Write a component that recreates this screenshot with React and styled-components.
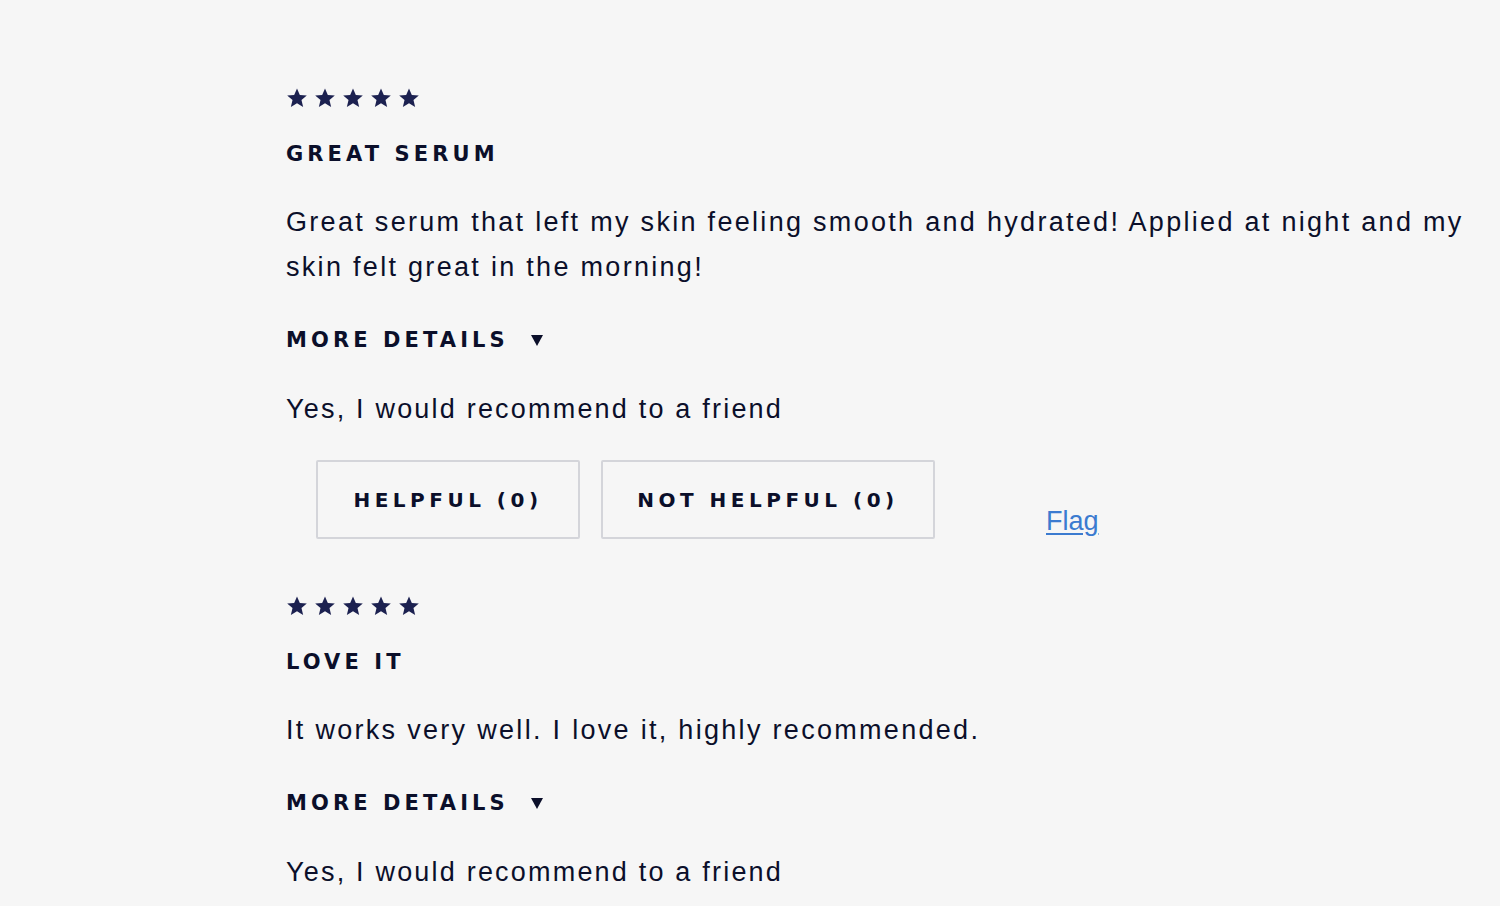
import React from 'react';
import styled, {createGlobalStyle} from 'styled-components';

const GlobalStyle = createGlobalStyle`
    html, body {
        margin: 0;
        padding: 0;
        background: #f6f6f6;
    }
    body {
        font-family: "Liberation Sans", Arial, sans-serif;
        color: #0b0f2a;
    }
`;

const heading = `
    font-family: "DejaVu Sans", "Liberation Sans", sans-serif;
    font-weight: 700;
    font-size: 21px;
    letter-spacing: 4.1px;
    line-height: 24px;
`;

const Page = styled.div`
    width: 1500px;
    height: 906px;
    overflow: hidden;
    padding: 87px 0 0 286px;
    box-sizing: border-box;
`;

const Review = styled.div`
    display: flex;
    flex-direction: column;
    align-items: flex-start;
    margin-bottom: 56px;
`;

const Stars = styled.div`
    display: flex;
    gap: 6px;
    height: 22px;
`;

const Title = styled.h3`
    margin: 33px 0 0;
    ${heading}
`;

const Body = styled.p`
    margin: 34px 0 0;
    font-size: 27px;
    line-height: 45px;
    letter-spacing: 2.3px;
    width: 1200px;
`;

const Details = styled.button`
    display: flex;
    align-items: center;
    gap: 22px;
    margin-top: 38px;
    padding: 0;
    border: 0;
    background: none;
    color: inherit;
    ${heading}
`;

const Caret = styled.span`
    width: 0;
    height: 0;
    border-left: 6px solid transparent;
    border-right: 6px solid transparent;
    border-top: 11px solid #0b0f2a;
`;

const Recommend = styled.p`
    margin: 45px 0 0;
    font-size: 27px;
    line-height: 24px;
    letter-spacing: 2.2px;
`;

const Actions = styled.div`
    display: flex;
    align-items: flex-end;
    margin: 39px 0 0 30px;
`;

const VoteButton = styled.button`
    width: ${props => props.w}px;
    height: 79px;
    margin-right: 21px;
    background: transparent;
    border: 2px solid #d4d5da;
    border-radius: 2px;
    color: #0b0f2a;
    ${heading}
    font-size: 20px;
    letter-spacing: 4.5px;
`;

const Flag = styled.a`
    margin-left: 90px;
    margin-bottom: 2px;
    color: #3b7bd0;
    font-size: 27px;
    text-decoration: underline;
    text-underline-offset: 3px;
`;

const Star = () => (
    <svg width="22" height="22" viewBox="0 0 24 24">
        <path fill="#1c2150" d="M12 1.5l3.1 7.1 7.6.6-5.8 5 1.8 7.5L12 17.7l-6.7 4 1.8-7.5-5.8-5 7.6-.6z"/>
    </svg>
);

const reviews = [
    {
        title: 'GREAT SERUM',
        body: 'Great serum that left my skin feeling smooth and hydrated! Applied at night and my skin felt great in the morning!'
    },
    {
        title: 'LOVE IT',
        body: 'It works very well. I love it, highly recommended.'
    }
];

const App = () => (
    <Page>
        <GlobalStyle/>
        {reviews.map(r => (
            <Review key={r.title}>
                <Stars>{[0, 1, 2, 3, 4].map(i => <Star key={i}/>)}</Stars>
                <Title>{r.title}</Title>
                <Body>{r.body}</Body>
                <Details>MORE DETAILS <Caret/></Details>
                <Recommend>Yes, I would recommend to a friend</Recommend>
                <Actions>
                    <VoteButton w={264}>HELPFUL (0)</VoteButton>
                    <VoteButton w={334}>NOT HELPFUL (0)</VoteButton>
                    <Flag href="#">Flag</Flag>
                </Actions>
            </Review>
        ))}
    </Page>
);

export default App;
